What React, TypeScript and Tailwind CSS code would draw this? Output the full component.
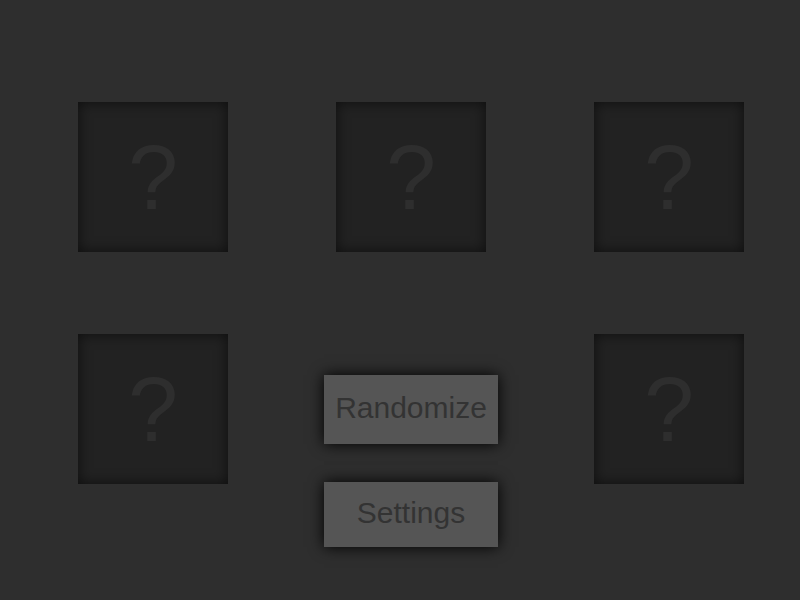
import React from "react";

function Card() {
  return (
    <div className="w-[150px] h-[150px] bg-[#222222] shadow-[inset_0_0_14px_rgba(0,0,0,0.6)] flex items-center justify-center">
      <span className="text-[90px] leading-none text-[#2e2e2e] font-['Liberation_Sans',Arial,sans-serif] mt-[1px]">?</span>
    </div>
  );
}

function Btn({ label, h }: { label: string; h: string }) {
  return (
    <button className={`w-[174px] ${h} bg-[#555555] text-[#333333] text-[30px] leading-none font-['Liberation_Sans',Arial,sans-serif] shadow-[0_0_14px_rgba(0,0,0,1)] flex items-center justify-center pb-[3px]`}>
      {label}
    </button>
  );
}

export default function App() {
  return (
    <div className="w-[800px] h-[600px] bg-[#2e2e2e] overflow-hidden">
      <div className="pl-[24px] pt-[102px] grid grid-cols-[258px_258px_258px] gap-y-[82px]">
        <div className="flex justify-center"><Card /></div>
        <div className="flex justify-center"><Card /></div>
        <div className="flex justify-center"><Card /></div>
        <div className="flex justify-center"><Card /></div>
        <div className="flex flex-col items-center pt-[41px] gap-[38px]">
          <Btn label="Randomize" h="h-[69px]" />
          <Btn label="Settings" h="h-[65px]" />
        </div>
        <div className="flex justify-center"><Card /></div>
      </div>
    </div>
  );
}
